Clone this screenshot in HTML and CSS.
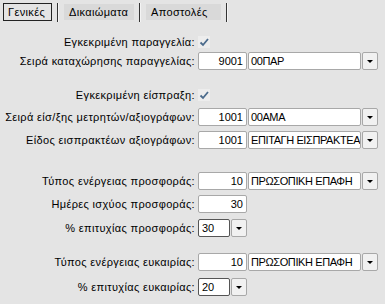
FILE: index.html
```html
<!DOCTYPE html>
<html lang="el">
<head>
    <meta charset="UTF-8">
    <meta name="viewport" content="width=device-width, initial-scale=1.0">
    <title>Ρυθμίσεις</title>
    <link rel="stylesheet" href="styles.css">
</head>
<body>

<div class="tabs">
    <div class="tab active">Γενικές</div>
    <div class="sep"></div>
    <div class="tab">Δικαιώματα</div>
    <div class="sep"></div>
    <div class="tab">Αποστολές</div>
    <div class="sep"></div>
</div>

<div class="form">
    <div class="row r-check1">
        <div class="label">Εγκεκριμένη παραγγελία:</div>
        <svg class="check" width="12" height="12" viewBox="0 0 12 12"><rect width="12" height="12" fill="#ededed"/><path d="M2.5 6.5 L5 9 L10 3" fill="none" stroke="#4b6b8c" stroke-width="1.8"/></svg>
    </div>
    <div class="row r-input1">
        <div class="label">Σειρά καταχώρησης παραγγελίας:</div>
        <div class="box code">9001</div>
        <div class="box desc">00ΠΑΡ</div>
        <div class="btn"><span class="arrow"></span></div>
    </div>

    <div class="row r-check2">
        <div class="label">Εγκεκριμένη είσπραξη:</div>
        <svg class="check" width="12" height="12" viewBox="0 0 12 12"><rect width="12" height="12" fill="#ededed"/><path d="M2.5 6.5 L5 9 L10 3" fill="none" stroke="#4b6b8c" stroke-width="1.8"/></svg>
    </div>
    <div class="row r-input2">
        <div class="label">Σειρά είσ/ξης μετρητών/αξιογράφων:</div>
        <div class="box code">1001</div>
        <div class="box desc">00ΑΜΑ</div>
        <div class="btn"><span class="arrow"></span></div>
    </div>
    <div class="row r-input3">
        <div class="label">Είδος εισπρακτέων αξιογράφων:</div>
        <div class="box code">1001</div>
        <div class="box desc">ΕΠΙΤΑΓΗ ΕΙΣΠΡΑΚΤΕΑ</div>
        <div class="btn"><span class="arrow"></span></div>
    </div>

    <div class="row r-input4">
        <div class="label">Τύπος ενέργειας προσφοράς:</div>
        <div class="box code">10</div>
        <div class="box desc">ΠΡΩΣΟΠΙΚΗ ΕΠΑΦΗ</div>
        <div class="btn"><span class="arrow"></span></div>
    </div>
    <div class="row r-input5">
        <div class="label">Ημέρες ισχύος προσφοράς:</div>
        <div class="box code">30</div>
    </div>
    <div class="row r-combo6">
        <div class="label">% επιτυχίας προσφοράς:</div>
        <div class="box small">30</div>
        <div class="btn"><span class="arrow"></span></div>
    </div>

    <div class="row r-input7">
        <div class="label">Τύπος ενέργειας ευκαιρίας:</div>
        <div class="box code">10</div>
        <div class="box desc">ΠΡΩΣΟΠΙΚΗ ΕΠΑΦΗ</div>
        <div class="btn"><span class="arrow"></span></div>
    </div>
    <div class="row r-combo8">
        <div class="label">% επιτυχίας ευκαιρίας:</div>
        <div class="box small">20</div>
        <div class="btn"><span class="arrow"></span></div>
    </div>
</div>

</body>
</html>
```

FILE: styles.css
```css
body {
    margin: 0;
    background: #e4e4e4;
    font-family: "Liberation Sans", Arial, sans-serif;
    font-size: 11px;
    letter-spacing: 0.35px;
    color: #000;
    width: 385px;
    height: 304px;
    overflow: hidden;
}
.tabs {
    display: flex;
    align-items: center;
    height: 24px;
    padding-left: 3px;
}
.tab {
    height: 16px;
    line-height: 16px;
    padding: 0 5px;
    background: #d9d9d9;
    white-space: nowrap;
}
.tab.active {
    background: transparent;
    border: 1px solid #222;
    padding: 0 4px;
    width: 39px;
}
.tab:nth-child(3) {
    width: 60px;
}
.tab:nth-child(5) {
    width: 65px;
}
.sep {
    width: 1px;
    height: 19px;
    background: #333;
    border-right: 1px solid #f4f4f4;
    margin: 0 5px;
}
.form {
    display: flex;
    flex-direction: column;
}
.row {
    display: flex;
    align-items: center;
    height: 18px;
}
.label {
    width: 195px;
    text-align: right;
    padding-right: 3px;
    white-space: nowrap;
}
.check {
    display: block;
}
.box {
    box-sizing: border-box;
    height: 18px;
    line-height: 16px;
    background: #fff;
    border: 1px solid #a8a8a8;
    border-radius: 2px;
    white-space: nowrap;
    overflow: hidden;
}
.code {
    width: 49px;
    text-align: right;
    padding-right: 3px;
    letter-spacing: 0;
}
.desc {
    width: 113px;
    padding-left: 2px;
    margin-left: 1px;
    letter-spacing: -0.4px;
}
.small {
    width: 32px;
    padding-left: 3px;
    border-color: #555;
    letter-spacing: 0;
}
.btn {
    box-sizing: border-box;
    width: 16px;
    height: 18px;
    margin-left: 1px;
    background: #f1f1f1;
    border: 1px solid #a8a8a8;
    border-radius: 2px;
    display: flex;
    align-items: center;
    justify-content: center;
}
.arrow {
    width: 0;
    height: 0;
    border-left: 3px solid transparent;
    border-right: 3px solid transparent;
    border-top: 3px solid #000;
    margin-top: 1px;
}
.r-check1 { margin-top: 12px; height: 12px; }
.r-input1 { margin-top: 4px; }
.r-check2 { margin-top: 19px; height: 12px; }
.r-input2 { margin-top: 7px; }
.r-input3 { margin-top: 5px; }
.r-input4 { margin-top: 23px; }
.r-input5 { margin-top: 5px; }
.r-combo6 { margin-top: 6px; }
.r-input7 { margin-top: 16px; }
.r-combo8 { margin-top: 7px; }
```
